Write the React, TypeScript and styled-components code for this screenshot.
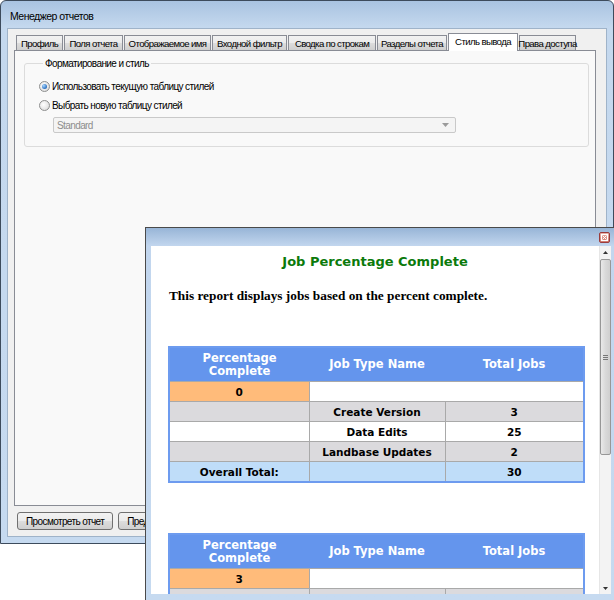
import React from "react";
import styled, { createGlobalStyle, css } from "styled-components";

const GlobalStyle = createGlobalStyle`
  html, body {
    margin: 0;
    padding: 0;
    background: #ffffff;
  }
  body {
    font-family: "Liberation Sans", Arial, sans-serif;
    font-size: 10px;
    letter-spacing: -0.6px;
    color: #000;
  }
`;

const Desktop = styled.div`
  position: relative;
  width: 614px;
  height: 600px;
  overflow: hidden;
  background: #fff;
`;

/* ---------- main window ---------- */

const MainWindow = styled.div`
  width: 614px;
  height: 544px;
  box-sizing: border-box;
  border: 1px solid #3d4b5c;
  border-radius: 6px 6px 0 0;
  background: linear-gradient(to bottom, #a9c3e1 0px, #c4d8ee 26px, #c6daf0 100%);
  display: flex;
  flex-direction: column;
  padding: 0 6px 6px 6px;
`;

const TitleBar = styled.div`
  height: 27px;
  display: flex;
  align-items: center;
  padding-left: 3px;
  padding-top: 2px;
  box-sizing: border-box;
  font-size: 10.5px;
  letter-spacing: -0.5px;
  color: #000;
`;

const Client = styled.div`
  flex: 1;
  background: #f0f0f0;
  border: 1px solid #9fb3c9;
  display: flex;
  flex-direction: column;
  padding: 4px 10px 0 6px;
`;

const TabStrip = styled.div`
  display: flex;
  align-items: flex-end;
  height: 17px;
  padding-left: 2px;
  position: relative;
  z-index: 1;
`;

const Tab = styled.div<{ $w: number; $active?: boolean }>`
  width: ${(p) => p.$w}px;
  box-sizing: border-box;
  height: 15px;
  margin-right: 1px;
  border: 1px solid #898c95;
  border-bottom: none;
  background: linear-gradient(to bottom, #f2f2f2 0%, #ebebeb 50%, #dddddd 51%, #cfcfcf 100%);
  display: flex;
  align-items: center;
  justify-content: center;
  font-size: 9.6px;
  color: #000;
  white-space: nowrap;
  ${(p) =>
    p.$active &&
    css`
      height: 18px;
      margin-bottom: -1px;
      background: #ffffff;
      border-color: #898c95;
      padding-bottom: 3px;
    `}
`;

const TabPanel = styled.div`
  height: 456px;
  box-sizing: border-box;
  border: 1px solid #898c95;
  background: #f9f9f9;
  padding: 7px 6px 0 9px;
`;

const GroupBox = styled.fieldset`
  margin: 0;
  height: 89px;
  box-sizing: border-box;
  border: 1px solid #dcdcdc;
  border-radius: 3px;
  padding: 8px 0 0 14px;
`;

const Legend = styled.legend`
  padding: 0 2px;
  margin-left: 4px;
  color: #000;
`;

const RadioRow = styled.label`
  display: flex;
  align-items: center;
  gap: 2px;
  height: 19px;
  color: #000;
`;

const RadioCircle = styled.span<{ $checked?: boolean }>`
  width: 11px;
  height: 11px;
  box-sizing: border-box;
  border-radius: 50%;
  border: 1px solid #8e8f8f;
  background: radial-gradient(circle at 40% 40%, #ffffff 0%, #e6e6e6 60%, #d0d0d0 100%);
  display: inline-flex;
  align-items: center;
  justify-content: center;
  ${(p) =>
    p.$checked &&
    css`
      &::after {
        content: "";
        width: 5px;
        height: 5px;
        border-radius: 50%;
        background: radial-gradient(circle at 35% 35%, #a9d7ff 0%, #2a6fc0 70%, #1b4f96 100%);
      }
    `}
`;

const Combo = styled.div`
  margin: 2px 0 0 14px;
  width: 403px;
  height: 16px;
  box-sizing: border-box;
  border: 1px solid #c9c9c9;
  border-radius: 2px;
  background: #f4f4f4;
  display: flex;
  align-items: center;
  justify-content: space-between;
  padding: 0 6px 0 3px;
  color: #8d8d8d;
`;

const ButtonRow = styled.div`
  display: flex;
  gap: 5px;
  padding: 6px 0 0 3px;
`;

const WinButton = styled.div`
  height: 18px;
  box-sizing: border-box;
  padding: 0 8px;
  border: 1px solid #707070;
  border-radius: 3px;
  background: linear-gradient(to bottom, #f2f2f2 0%, #ebebeb 50%, #dddddd 51%, #cfcfcf 100%);
  display: flex;
  align-items: center;
  color: #000;
  white-space: nowrap;
`;

/* ---------- report dialog ---------- */

const Dialog = styled.div`
  position: absolute;
  left: 145px;
  top: 227px;
  width: 469px;
  height: 373px;
  box-sizing: border-box;
  border-left: 1px solid #4a4a4a;
  border-top: 1px solid #4a4a4a;
  background: linear-gradient(to bottom, #98b5d7 0px, #c2d6ee 18px, #c6daf0 100%);
  display: flex;
  flex-direction: column;
  padding: 0 3px 6px 5px;
  letter-spacing: normal;
`;

const DialogTitle = styled.div`
  height: 18px;
  display: flex;
  justify-content: flex-end;
  align-items: center;
  padding-right: 1px;
  padding-top: 1px;
  box-sizing: border-box;
`;

const CloseBox = styled.div`
  width: 11px;
  height: 11px;
  box-sizing: border-box;
  border: 1px solid #9a3b3b;
  border-radius: 2px;
  background: linear-gradient(to bottom, #eab1a8, #d27a6d);
  display: flex;
  align-items: center;
  justify-content: center;
`;

const DialogBody = styled.div`
  flex: 1;
  display: flex;
  min-height: 0;
`;

const ReportArea = styled.div`
  flex: 1;
  background: #ffffff;
  overflow: hidden;
  padding: 8px 0 0 17px;
`;

const ReportTitle = styled.div`
  font-family: "DejaVu Sans", Verdana, sans-serif;
  font-weight: bold;
  font-size: 13px;
  line-height: 16px;
  color: #0b7a0b;
  text-align: center;
  padding-right: 17px;
`;

const ReportDesc = styled.div`
  margin-top: 18px;
  font-family: "Liberation Serif", "Times New Roman", serif;
  font-weight: bold;
  font-size: 13.3px;
  line-height: 15px;
  padding-left: 1px;
`;

const ReportTable = styled.table<{ $gap: number }>`
  margin-top: ${(p) => p.$gap}px;
  width: 413px;
  border-collapse: collapse;
  border: 2px solid #6d9bef;
  font-family: "DejaVu Sans", Verdana, sans-serif;
  font-weight: bold;
  table-layout: fixed;
`;

const HeadCell = styled.th<{ $w: number }>`
  width: ${(p) => p.$w}px;
  height: 33px;
  padding: 0;
  background: #6495ed;
  color: #ffffff;
  font-size: 11.5px;
  line-height: 13px;
  text-align: center;
  border: none;
`;

type Tone = "grey" | "white" | "orange" | "blue";
const toneColors: Record<Tone, string> = {
  grey: "#dbdadd",
  white: "#ffffff",
  orange: "#ffbb7a",
  blue: "#bfddf9",
};

const Cell = styled.td<{ $tone: Tone }>`
  height: 19px;
  padding: 0;
  background: ${(p) => toneColors[p.$tone]};
  border: 1px solid #a9a9a9;
  font-size: 10.5px;
  line-height: 12px;
  text-align: center;
  color: #000;
`;

const ScrollBar = styled.div`
  width: 12px;
  background: #f3f3f3;
  border-left: 1px solid #e6e6e6;
  box-sizing: border-box;
  display: flex;
  flex-direction: column;
`;

const ScrollArrow = styled.div`
  height: 12px;
  display: flex;
  align-items: center;
  justify-content: center;
`;

const ScrollTrack = styled.div`
  flex: 1;
  padding-top: 1px;
`;

const ScrollThumb = styled.div`
  height: 196px;
  box-sizing: border-box;
  border: 1px solid #979797;
  border-radius: 2px;
  background: linear-gradient(to right, #e9e9e9, #d9d9d9 50%, #cfcfcf);
  display: flex;
  align-items: center;
  justify-content: center;
`;

const tabs = [
  { label: "Профиль", w: 47 },
  { label: "Поля отчета", w: 59 },
  { label: "Отображаемое имя", w: 87 },
  { label: "Входной фильтр", w: 75 },
  { label: "Сводка по строкам", w: 88 },
  { label: "Разделы отчета", w: 70 },
  { label: "Стиль вывода", w: 70, active: true },
  { label: "Права доступа", w: 57 },
];

type Row = { pct?: string; name?: string; total?: string; tone: Tone; kind: "pct" | "item" | "total" };

const firstTable: Row[] = [
  { kind: "pct", pct: "0", tone: "orange" },
  { kind: "item", name: "Create Version", total: "3", tone: "grey" },
  { kind: "item", name: "Data Edits", total: "25", tone: "white" },
  { kind: "item", name: "Landbase Updates", total: "2", tone: "grey" },
  { kind: "total", total: "30", tone: "blue" },
];

const secondTable: Row[] = [
  { kind: "pct", pct: "3", tone: "orange" },
  { kind: "item", name: "Create Version", total: "5", tone: "grey" },
];

function JobTable({ rows, gap }: { rows: Row[]; gap: number }) {
  return (
    <ReportTable $gap={gap}>
      <thead>
        <tr>
          <HeadCell $w={139}>
            Percentage
            <br />
            Complete
          </HeadCell>
          <HeadCell $w={136}>Job Type Name</HeadCell>
          <HeadCell $w={138}>Total Jobs</HeadCell>
        </tr>
      </thead>
      <tbody>
        {rows.map((r, i) => {
          if (r.kind === "pct") {
            return (
              <tr key={i}>
                <Cell $tone="orange">{r.pct}</Cell>
                <Cell $tone="white" colSpan={2} />
              </tr>
            );
          }
          if (r.kind === "total") {
            return (
              <tr key={i}>
                <Cell $tone="blue">Overall Total:</Cell>
                <Cell $tone="blue" />
                <Cell $tone="blue">{r.total}</Cell>
              </tr>
            );
          }
          return (
            <tr key={i}>
              <Cell $tone={r.tone} />
              <Cell $tone={r.tone}>{r.name}</Cell>
              <Cell $tone={r.tone}>{r.total}</Cell>
            </tr>
          );
        })}
      </tbody>
    </ReportTable>
  );
}

export default function App() {
  return (
    <>
      <GlobalStyle />
      <Desktop>
        <MainWindow>
          <TitleBar>Менеджер отчетов</TitleBar>
          <Client>
            <TabStrip>
              {tabs.map((t) => (
                <Tab key={t.label} $w={t.w} $active={t.active}>
                  {t.label}
                </Tab>
              ))}
            </TabStrip>
            <TabPanel>
              <GroupBox>
                <Legend>Форматирование и стиль</Legend>
                <RadioRow>
                  <RadioCircle $checked />
                  Использовать текущую таблицу стилей
                </RadioRow>
                <RadioRow>
                  <RadioCircle />
                  Выбрать новую таблицу стилей
                </RadioRow>
                <Combo>
                  Standard
                  <svg width="7" height="4" viewBox="0 0 7 4">
                    <path d="M0 0 H7 L3.5 4 Z" fill="#9a9a9a" />
                  </svg>
                </Combo>
              </GroupBox>
            </TabPanel>
            <ButtonRow>
              <WinButton>Просмотреть отчет</WinButton>
              <WinButton>Предварительный просмотр</WinButton>
            </ButtonRow>
          </Client>
        </MainWindow>

        <Dialog>
          <DialogTitle>
            <CloseBox>
              <svg width="7" height="7" viewBox="0 0 7 7">
                <rect x="0.5" y="0.5" width="6" height="6" fill="none" stroke="#fff" />
                <path d="M1.5 1.5 L5.5 5.5 M5.5 1.5 L1.5 5.5" stroke="#fff" strokeWidth="1" />
              </svg>
            </CloseBox>
          </DialogTitle>
          <DialogBody>
            <ReportArea>
              <ReportTitle>Job Percentage Complete</ReportTitle>
              <ReportDesc>This report displays jobs based on the percent complete.</ReportDesc>
              <JobTable rows={firstTable} gap={43} />
              <JobTable rows={secondTable} gap={50} />
            </ReportArea>
            <ScrollBar>
              <ScrollArrow>
                <svg width="5" height="3" viewBox="0 0 5 3">
                  <path d="M0 3 H5 L2.5 0 Z" fill="#333" />
                </svg>
              </ScrollArrow>
              <ScrollTrack>
                <ScrollThumb>
                  <svg width="5" height="5" viewBox="0 0 5 5">
                    <path d="M0 0.5 H5 M0 2.5 H5 M0 4.5 H5" stroke="#777" strokeWidth="1" />
                  </svg>
                </ScrollThumb>
              </ScrollTrack>
              <ScrollArrow>
                <svg width="5" height="3" viewBox="0 0 5 3">
                  <path d="M0 0 H5 L2.5 3 Z" fill="#333" />
                </svg>
              </ScrollArrow>
            </ScrollBar>
          </DialogBody>
        </Dialog>
      </Desktop>
    </>
  );
}
